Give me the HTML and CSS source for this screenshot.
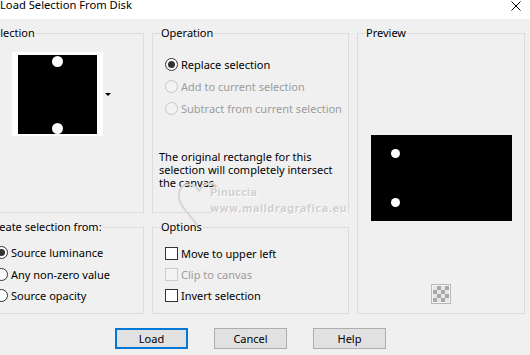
FILE: index.html
```html
<!DOCTYPE html>
<html>
<head>
<meta charset="utf-8">
<link rel="stylesheet" href="styles.css">
</head>
<body>
<div class="titlebar">
  <span class="title">Load Selection From Disk</span>
  <svg class="close" width="10" height="10" viewBox="0 0 10 10"><path d="M0.5 0.5 L9.5 9.5 M9.5 0.5 L0.5 9.5" stroke="#000" stroke-width="1" fill="none"/></svg>
</div>
<div class="dialog">
  <div class="groups">
    <fieldset class="grp g-sel">
      <legend>Selection</legend>
      <div class="thumb-row">
        <div class="thumb">
          <div class="thumb-black">
            <span class="tdot"></span>
            <span class="tdot"></span>
          </div>
        </div>
        <span class="drop-arrow"></span>
      </div>
    </fieldset>
    <fieldset class="grp g-op">
      <legend>Operation</legend>
      <div class="list list-op">
        <div class="row"><span class="radio checked"></span><span>Replace selection</span></div>
        <div class="row disabled"><span class="radio"></span><span>Add to current selection</span></div>
        <div class="row disabled"><span class="radio"></span><span>Subtract from current selection</span></div>
      </div>
      <p class="desc">The original rectangle for this<br>selection will completely intersect<br>the canvas.</p>
    </fieldset>
    <fieldset class="grp g-prev">
      <legend>Preview</legend>
      <div class="prev-col">
        <div class="prev-box">
          <span class="pdot pdot1"></span>
          <span class="pdot pdot2"></span>
        </div>
        <span class="checker"></span>
      </div>
    </fieldset>
    <fieldset class="grp g-create">
      <legend>Create selection from:</legend>
      <div class="list list-create">
        <div class="row"><span class="radio checked"></span><span>Source luminance</span></div>
        <div class="row"><span class="radio"></span><span>Any non-zero value</span></div>
        <div class="row"><span class="radio"></span><span>Source opacity</span></div>
      </div>
    </fieldset>
    <fieldset class="grp g-opts">
      <legend>Options</legend>
      <div class="list list-opts">
        <div class="row"><span class="check"></span><span>Move to upper left</span></div>
        <div class="row disabled"><span class="check"></span><span>Clip to canvas</span></div>
        <div class="row"><span class="check"></span><span>Invert selection</span></div>
      </div>
    </fieldset>
  </div>
  <div class="buttons">
    <button class="btn default">Load</button>
    <button class="btn">Cancel</button>
    <button class="btn">Help</button>
  </div>
  <div class="watermark">
    <svg class="wm-heart" width="50" height="50" viewBox="0 0 50 50"><path d="M24 48 C16 36 4 28 6 16 C8 6 20 4 26 14 C30 6 40 4 44 10" stroke="#d6d6d6" stroke-width="2" fill="none"/></svg>
    <span class="wm1">Pinuccia</span>
    <span class="wm2">www.maildragrafica.eu</span>
  </div>
</div>
</body>
</html>
```
FILE: styles.css
```css
html, body {
  margin: 0;
  padding: 0;
}
body {
  width: 530px;
  height: 355px;
  overflow: hidden;
  background: #f0f0f0;
  font-family: "Noto Sans", "Open Sans", sans-serif;
  font-size: 11px;
  color: #000;
}
.titlebar {
  height: 19px;
  background: #fff;
  display: flex;
  justify-content: space-between;
  align-items: flex-start;
  padding-right: 9px;
}
.title {
  font-size: 11.2px;
  line-height: 12px;
  margin-top: -1px;
}
.close {
  margin-top: 1px;
}
.dialog {
  position: relative;
}
.groups {
  display: grid;
  grid-template-columns: 165px 197px 168px;
  grid-template-rows: 187px 94px;
  column-gap: 8px;
  row-gap: 7px;
  margin-left: -21px;
  margin-top: 7px;
}
.grp {
  margin: 0;
  padding: 0;
  min-width: 0;
  border: 1px solid #dcdcdc;
}
.grp legend {
  margin-left: 7px;
  padding: 0 1px;
  line-height: 14px;
  font-size: 11px;
}
.g-sel { grid-column: 1; grid-row: 1; }
.g-op { grid-column: 2; grid-row: 1; }
.g-prev { grid-column: 3; grid-row: 1 / span 2; }
.g-create { grid-column: 1; grid-row: 2; }
.g-opts { grid-column: 2; grid-row: 2; }

.thumb-row {
  display: flex;
  align-items: center;
  gap: 2px;
  margin-top: 12px;
  margin-left: 32px;
}
.thumb {
  background: #fff;
  padding: 3px 6px 2px 6px;
}
.thumb-black {
  width: 79px;
  height: 79px;
  background: #000;
  display: flex;
  flex-direction: column;
  justify-content: space-between;
  align-items: center;
  padding: 1px 0 0 0;
  box-sizing: border-box;
}
.tdot {
  width: 11px;
  height: 11px;
  border-radius: 50%;
  background: #fff;
}
.drop-arrow {
  width: 0;
  height: 0;
  border-top: 3px solid #000;
  border-left: 3px solid transparent;
  border-right: 3px solid transparent;
}

.list .row {
  display: flex;
  align-items: center;
  gap: 3px;
  height: 22px;
}
.list-op {
  margin-top: 13px;
  padding-left: 12px;
}
.list-create {
  margin-top: 8px;
  padding-left: 15px;
}
.list-create .row { height: 21.5px; }
.list-opts {
  margin-top: 9px;
  padding-left: 12px;
}
.list-opts .row { height: 21px; }

.row.disabled { color: #9c9c9c; }

.radio {
  width: 13px;
  height: 13px;
  box-sizing: border-box;
  border: 1px solid #333;
  border-radius: 50%;
  background: #fff;
  display: flex;
  align-items: center;
  justify-content: center;
  flex: none;
}
.radio.checked::after {
  content: "";
  width: 7px;
  height: 7px;
  border-radius: 50%;
  background: #333;
}
.row.disabled .radio {
  border-color: #c6c6c6;
  background: #f3f3f3;
}
.check {
  width: 13px;
  height: 13px;
  box-sizing: border-box;
  border: 1px solid #333;
  background: #fff;
  flex: none;
}
.row.disabled .check {
  border-color: #cccccc;
  background: #f3f3f3;
}

.desc {
  margin: 31px 0 0 0;
  padding-left: 6px;
  line-height: 13px;
}

.prev-col {
  display: flex;
  flex-direction: column;
  align-items: center;
}
.prev-box {
  position: relative;
  width: 141px;
  height: 86px;
  background: #000;
  margin-top: 95px;
}
.pdot {
  position: absolute;
  width: 9px;
  height: 9px;
  border-radius: 50%;
  background: #fff;
  left: 20px;
}
.pdot1 { top: 14px; }
.pdot2 { top: 63px; }
.checker {
  margin-top: 63px;
  width: 20px;
  height: 20px;
  box-sizing: border-box;
  border: 1px solid #b9b9b9;
  padding: 1px;
  background: #f4f4f4;
}
.checker::after {
  content: "";
  display: block;
  width: 16px;
  height: 16px;
  background: repeating-conic-gradient(#a9a9a9 0 25%, #e6e6e6 0 50%) 0 0 / 8px 8px;
}

.buttons {
  display: flex;
  gap: 26px;
  margin-top: 14px;
  padding-left: 115px;
}
.btn {
  width: 73px;
  height: 21px;
  box-sizing: border-box;
  background: #e1e1e1;
  border: 1px solid #adadad;
  font-family: "Noto Sans", "Open Sans", sans-serif;
  font-size: 11px;
  color: #000;
  padding: 0;
  margin: 0;
}
.btn.default {
  border: 2px solid #0078d7;
}

.watermark {
  position: absolute;
  left: 165px;
  top: 151px;
  width: 190px;
  height: 60px;
  pointer-events: none;
}
.wm-heart {
  position: absolute;
  left: 8px;
  top: 0;
}
.wm1, .wm2 {
  position: absolute;
  color: #d2d2d2;
  font-weight: bold;
  font-family: "DejaVu Sans", sans-serif;
  text-shadow: 1px 1px 0 #fff;
  white-space: nowrap;
}
.wm1 {
  left: 45px;
  top: 10px;
  font-size: 10px;
}
.wm2 {
  left: 45px;
  top: 26px;
  font-size: 10px;
  letter-spacing: 0.3px;
}
```
